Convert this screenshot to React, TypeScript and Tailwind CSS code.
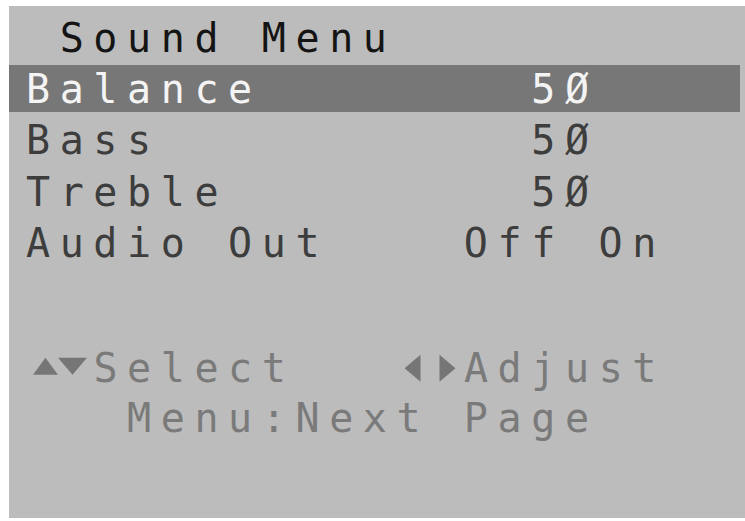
import React from 'react';

// On-screen display font grid: every character sits in a 33.7px cell
const COL = 33.7;

const items = [
  { label: 'Balance', value: '5Ø', col: 15, active: true },
  { label: 'Bass', value: '5Ø', col: 15 },
  { label: 'Treble', value: '5Ø', col: 15 },
  { label: 'Audio Out', value: 'Off On', col: 13 },
];

const UpDown = () => (
  <svg width={COL * 2} height={50} viewBox="0 0 67.4 50" className="shrink-0">
    <polygon points="7,31.8 19.5,14.8 32,31.8" fill="#767676" />
    <polygon points="32,14.8 61,14.8 46.5,31.8" fill="#767676" />
  </svg>
);

const LeftRight = () => (
  <svg width={COL * 2} height={50} viewBox="0 0 67.4 50" className="shrink-0">
    <polygon points="23.5,11.8 23.5,38.8 7.5,25.3" fill="#767676" />
    <polygon points="42.5,11.8 42.5,38.8 58.5,25.3" fill="#767676" />
  </svg>
);

export default function App() {
  return (
    <div className="w-[745px] h-[521px] bg-white pl-[9px] pt-[6px] pb-[3px] overflow-hidden">
      <div className="h-full bg-[#bcbcbc] pt-[7px] font-['DejaVu_Sans_Mono',monospace] text-[40px] tracking-[9.6px] whitespace-pre">
        {/* Title */}
        <div className="pl-[17px] h-[51.5px] leading-[51.5px] text-[#141414]">{' Sound Menu'}</div>

        {/* Menu entries */}
        {items.map((item, i) =>
          item.active ? (
            <div
              key={item.label}
              className="mr-[5px] pl-[17px] h-[47px] leading-[49px] bg-[#777777] text-[#f4f4f4]"
            >
              {item.label.padEnd(item.col) + item.value}
            </div>
          ) : (
            <div
              key={item.label}
              className={`pl-[17px] h-[51.5px] leading-[51.5px] text-[#3d3d3d] ${i === 1 ? 'mt-[3.5px]' : ''}`}
            >
              {item.label.padEnd(item.col) + item.value}
            </div>
          )
        )}

        {/* Key help */}
        <div className="mt-[73.7px] pl-[17px] flex h-[50px] leading-[50px] text-[#7a7a7a]">
          <UpDown />
          <span>{'Select   '}</span>
          <LeftRight />
          <span>Adjust</span>
        </div>
        <div className="pl-[17px] h-[50px] leading-[50px] text-[#7a7a7a]">{'   Menu:Next Page'}</div>
      </div>
    </div>
  );
}
